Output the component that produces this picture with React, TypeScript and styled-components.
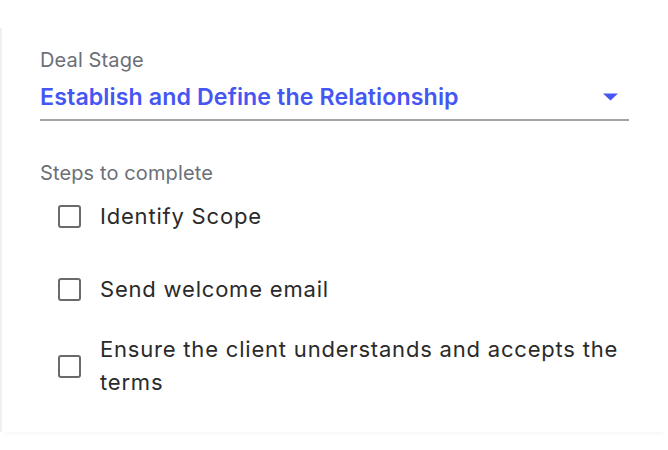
import React from "react";
import styled, { createGlobalStyle } from "styled-components";

const Global = createGlobalStyle`
  html, body { margin: 0; padding: 0; background: #ffffff; }
  body { font-family: Inter, "Noto Sans", sans-serif; }
`;

const Page = styled.div`
  width: 668px;
  height: 450px;
  padding-top: 28px;
  box-sizing: border-box;
`;

const Panel = styled.section`
  height: 404px;
  box-sizing: border-box;
  border-left: 2px solid #edf1f6;
  padding: 20px 39px 0 38px;
  background: #fff;
  box-shadow: 0 5px 6px -4px rgba(0, 0, 0, 0.05);
  display: flex;
  flex-direction: column;
`;

const Label = styled.div`
  font-size: 20px;
  line-height: 24px;
  color: #6b6f78;
  letter-spacing: 0.12px;
`;

const Select = styled.div`
  display: flex;
  align-items: center;
  justify-content: space-between;
  margin-top: 11px;
  padding-bottom: 8px;
  border-bottom: 2px solid #a3a3a3;
  margin-bottom: 40px;
`;

const SelectValue = styled.span`
  font-size: 23.2px;
  line-height: 28px;
  font-weight: 600;
  color: #4556f3;
  letter-spacing: 0.1px;
`;

const Caret = styled.svg`
  width: 15px;
  height: 8px;
  margin-right: 11px;
`;

const Steps = styled.ul`
  list-style: none;
  margin: 2px 0 0 0;
  padding: 0 0 0 18px;
  display: flex;
  flex-direction: column;
  gap: 14px;
`;

const Step = styled.li`
  display: flex;
  align-items: center;
  gap: 19px;
  min-height: 59px;
`;

const Box = styled.span`
  flex: none;
  box-sizing: border-box;
  width: 23px;
  height: 23px;
  border: 2px solid #6a6a6a;
  border-radius: 3px;
`;

const StepText = styled.span`
  font-size: 22px;
  line-height: 33px;
  color: #2a2a2a;
  letter-spacing: 0.8px;
`;

const steps = [
  "Identify Scope",
  "Send welcome email",
  "Ensure the client understands and accepts the terms",
];

export default function App() {
  return (
    <>
      <Global />
      <Page>
        <Panel>
          <Label>Deal Stage</Label>
          <Select>
            <SelectValue>Establish and Define the Relationship</SelectValue>
            <Caret viewBox="0 0 15 8">
              <path d="M0 0.5 L15 0.5 L7.5 7.5 Z" fill="#4556f3" />
            </Caret>
          </Select>
          <Label>Steps to complete</Label>
          <Steps>
            {steps.map((s) => (
              <Step key={s}>
                <Box />
                <StepText>{s}</StepText>
              </Step>
            ))}
          </Steps>
        </Panel>
      </Page>
    </>
  );
}
